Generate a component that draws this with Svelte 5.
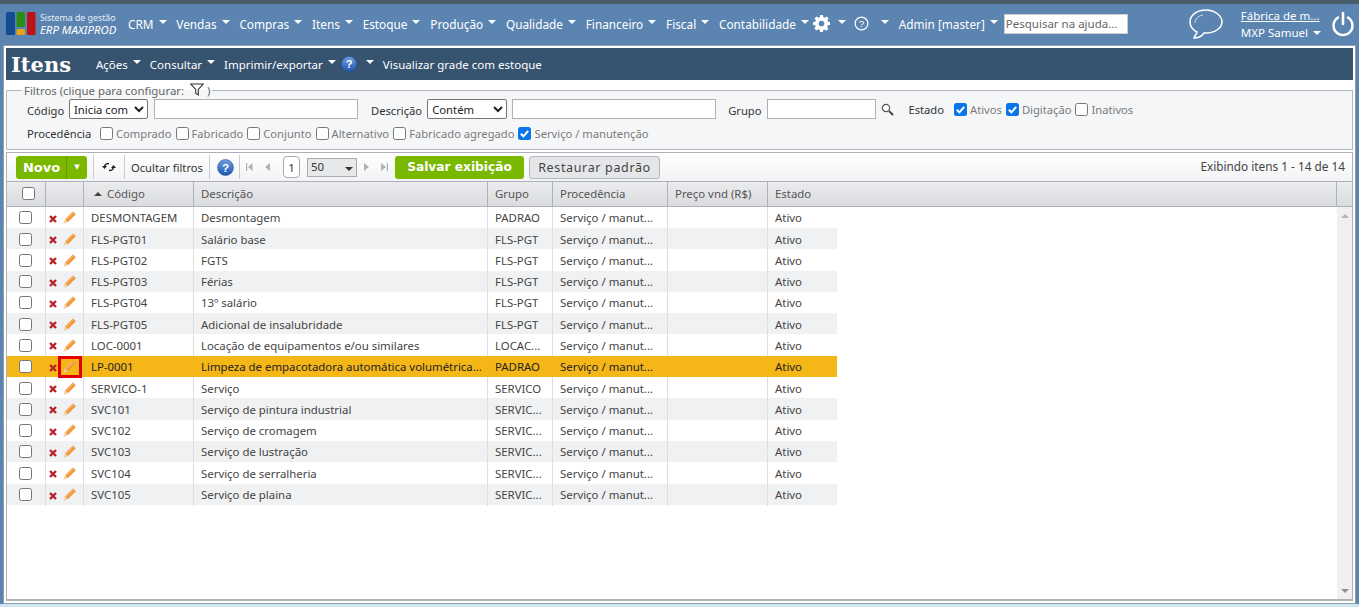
<script>
  const menus = ['CRM','Vendas','Compras','Itens','Estoque','Produção','Qualidade','Financeiro','Fiscal','Contabilidade'];
  const S = 'Serviço / manut...';
  const rows = [
    ['DESMONTAGEM','Desmontagem','PADRAO'],
    ['FLS-PGT01','Salário base','FLS-PGT'],
    ['FLS-PGT02','FGTS','FLS-PGT'],
    ['FLS-PGT03','Férias','FLS-PGT'],
    ['FLS-PGT04','13º salário','FLS-PGT'],
    ['FLS-PGT05','Adicional de insalubridade','FLS-PGT'],
    ['LOC-0001','Locação de equipamentos e/ou similares','LOCAC...'],
    ['LP-0001','Limpeza de empacotadora automática volumétrica...','PADRAO'],
    ['SERVICO-1','Serviço','SERVICO'],
    ['SVC101','Serviço de pintura industrial','SERVIC...'],
    ['SVC102','Serviço de cromagem','SERVIC...'],
    ['SVC103','Serviço de lustração','SERVIC...'],
    ['SVC104','Serviço de serralheria','SERVIC...'],
    ['SVC105','Serviço de plaina','SERVIC...']
  ];
  const proc = [['Comprado',false],['Fabricado',false],['Conjunto',false],['Alternativo',false],['Fabricado agregado',false],['Serviço / manutenção',true]];
</script>

{#snippet caret()}<span class="caret"></span>{/snippet}
{#snippet help(size)}
  <svg width={size} height={size} viewBox="0 0 16 16" class="help"><defs><linearGradient id="hg" x1="0" y1="0" x2="0" y2="1"><stop offset="0" stop-color="#6f9fe0"/><stop offset="1" stop-color="#1f55b5"/></linearGradient></defs><circle cx="8" cy="8" r="7.5" fill="url(#hg)" stroke="#2c5a9c" stroke-width=".6"/><text x="8" y="12" text-anchor="middle" font-size="11" font-weight="700" fill="#fff" font-family="Liberation Sans, sans-serif">?</text></svg>
{/snippet}
{#snippet box(checked)}
  {#if checked}
    <svg class="cb" width="13" height="13" viewBox="0 0 13 13"><rect width="13" height="13" rx="2.5" fill="#0a75e8"/><path d="M2.8 6.8l2.6 2.6 4.8-5.6" fill="none" stroke="#fff" stroke-width="2"/></svg>
  {:else}
    <span class="cb empty"></span>
  {/if}
{/snippet}

<div class="page">
  <div class="topstrip"></div>
  <header class="head">
    <div class="brand">
      <svg width="30" height="24" viewBox="0 0 30 24"><rect x="0" y="0" width="9" height="23" rx="1.5" fill="#124b8f"/><rect x="10.500" y="0" width="8.500" height="15" rx="1.500" fill="#2f8c12"/><rect x="10.500" y="17" width="8.500" height="6" rx="1.500" fill="#e4a817"/><rect x="21" y="0" width="8.500" height="23" rx="1.500" fill="#bd1216"/></svg>
      <div class="brandtext"><span>Sistema de gestão</span><em>ERP MAXIPROD</em></div>
    </div>
    <nav class="menu">
      {#each menus as m}<span class="mi">{m}{@render caret()}</span>{/each}
      <span class="mi ic gear">
        <svg width="17" height="17" viewBox="0 0 24 24"><path fill="#fff" fill-rule="evenodd" d="M10 1h4l.6 3.200 2 .8L19.300 3.200l2.800 2.800-1.800 2.700.8 2L24 11v4l-3.200.6-.8 2 1.800 2.700-2.800 2.800-2.700-1.800-2 .8L14 25h-4l-.6-3.200-2-.8-2.700 1.800-2.800-2.800 1.800-2.700-.8-2L0 15v-4l3.200-.6.8-2L2.200 5.700 5 3l2.700 1.800 2-.8zM12 9a4 4 0 1 0 0 8 4 4 0 0 0 0-8z" transform="translate(0 -1)"/></svg>
        <span class="caret c2"></span>
      </span>
      <span class="mi ic">
        <svg width="15" height="15" viewBox="0 0 16 16"><circle cx="8" cy="8" r="6.800" fill="none" stroke="#fff" stroke-width="1.300"/><text x="8" y="12" text-anchor="middle" font-size="10.500" fill="#fff" font-family="Liberation Sans, sans-serif">?</text></svg>
        <span class="caret c3"></span>
      </span>
      <span class="mi admin">Admin [master]{@render caret()}</span>
    </nav>
    <input class="search" placeholder="Pesquisar na ajuda..." />
    <svg class="chat" width="36" height="32" viewBox="0 0 36 32"><path d="M18 2C9 2 2 7 2 14c0 4 3 8 7 10-1 3-3 5-3 6 4 0 8-2 10-5h2c9 0 16-5 16-11S27 2 18 2z" fill="none" stroke="#fff" stroke-width="1.500"/><path d="M7 15c0-4 3-7 8-8" fill="none" stroke="#fff" stroke-width="1" opacity=".7"/></svg>
    <div class="who"><a href="#f">Fábrica de m...</a><span>MXP Samuel{@render caret()}</span></div>
    <svg class="power" width="24" height="26" viewBox="0 0 24 26"><path d="M7 6.500a9.500 9.500 0 1 0 10 0" fill="none" stroke="#fff" stroke-width="2.400" stroke-linecap="round"/><path d="M12 2v11" stroke="#fff" stroke-width="2.600" stroke-linecap="round"/></svg>
  </header>

  <main class="panel">
    <div class="titlebar">
      <h1>Itens</h1>
      <div class="tmenu">
        <span class="ti">Ações{@render caret()}</span>
        <span class="ti">Consultar{@render caret()}</span>
        <span class="ti">Imprimir/exportar{@render caret()}</span>
        <span class="ti hp">{@render help(16)}<span class="caret c4"></span></span>
        <span class="ti">Visualizar grade com estoque</span>
      </div>
    </div>

    <div class="filterwrap">
      <fieldset>
        <legend>Filtros (clique para configurar:
          <svg width="14" height="13" viewBox="0 0 14 13"><path d="M.8 1h12.400L8.300 6.500V12L5.700 10.300V6.500z" fill="#fff" stroke="#333" stroke-width="1.100"/></svg> )</legend>
        <div class="frow one">
          <label class="l1">Código</label>
          <select class="pick s1"><option>Inicia com</option></select>
          <input class="txt t0" />
          <label class="l2">Descrição</label>
          <select class="pick s2"><option>Contém</option></select>
          <input class="txt t1" />
          <label class="l3">Grupo</label>
          <input class="txt t2" />
          <svg class="mag" width="13" height="13" viewBox="0 0 13 13"><circle cx="5" cy="5" r="3.600" fill="#fff" stroke="#555" stroke-width="1.200"/><path d="M8 8l4 4" stroke="#444" stroke-width="2"/></svg>
          <label class="l4">Estado</label>
          <span class="ck">{@render box(true)}<i>Ativos</i></span>
          <span class="ck">{@render box(true)}<i>Digitação</i></span>
          <span class="ck">{@render box(false)}<i>Inativos</i></span>
        </div>
        <div class="frow two">
          <label class="l5">Procedência</label>
          {#each proc as p}<span class="ck">{@render box(p[1])}<i>{p[0]}</i></span>{/each}
        </div>
      </fieldset>
    </div>

    <div class="gridbox">
      <div class="toolbar">
        <div class="novo"><span class="nv">Novo</span><span class="nc">▼</span></div>
        <span class="sep"></span>
        <svg class="ref" width="16" height="14" viewBox="0 0 16 14"><path d="M8 3a4 4 0 0 0-5 3H1l2.500 3L6 6H4.500A2.600 2.600 0 0 1 8 4.500zM8 11a4 4 0 0 0 5-3h2l-2.500-3L10 8h1.500A2.600 2.600 0 0 1 8 9.500z" fill="#222"/></svg>
        <span class="sep"></span>
        <span class="oc">Ocultar filtros</span>
        <span class="sep"></span>
        <span class="h2">{@render help(17)}</span>
        <span class="sep"></span>
        <svg class="pg" width="24" height="10" viewBox="0 0 24 10"><path d="M0 1h1.200v8H0zM6.500 1v8L2 5zM24 1v8l-5-4z" fill="#aeb2b6"/></svg>
        <span class="pnum">1</span>
        <span class="psize">50<b></b></span>
        <svg class="pg2" width="24" height="10" viewBox="0 0 24 10"><path d="M0 1v8l5-4zM17 1v8l5-4zM22.800 1H24v8h-1.200z" fill="#aeb2b6"/></svg>
        <button class="save">Salvar exibição</button>
        <button class="rest">Restaurar padrão</button>
        <span class="count">Exibindo itens 1 - 14 de 14</span>
      </div>

      <div class="ghead">
        <div class="gh c0"><span class="cb empty big"></span></div>
        <div class="gh"></div>
        <div class="gh code"><span class="tri"></span>Código</div>
        <div class="gh">Descrição</div>
        <div class="gh">Grupo</div>
        <div class="gh">Procedência</div>
        <div class="gh">Preço vnd (R$)</div>
        <div class="gh last">Estado</div>
        <div class="gh sb"></div>
      </div>

      <div class="gbody">
        <div class="rows">
          {#each rows as r, i}
            <div class="row" class:alt={i % 2 === 1} class:hl={i === 7}>
              <div class="c c0"><span class="cb empty big"></span></div>
              <div class="c acts">
                <svg class="x" width="8" height="8" viewBox="0 0 8 8"><path d="M1 1l6 6M7 1L1 7" stroke="#bb2129" stroke-width="2.400"/></svg>
                <span class="pw" class:mark={i === 7}>
                  <svg class="pen" width="15" height="15" viewBox="0 0 15 15"><path d="M3 9.500L11 1.500 13.800 4.300 5.800 12.300z" fill="#ef9637"/><path d="M3 9.500L11 1.500 12.200 2.700 4.200 10.700z" fill="#f6ae63"/><path d="M3 9.500L1.300 14 5.800 12.300z" fill="#f4cf9e"/></svg>
                </span>
              </div>
              <div class="c">{r[0]}</div>
              <div class="c">{r[1]}</div>
              <div class="c">{r[2]}</div>
              <div class="c">{S}</div>
              <div class="c"></div>
              <div class="c">Ativo</div>
            </div>
          {/each}
        </div>
        <div class="scroll"><span class="up"></span><span class="down"></span></div>
      </div>
    </div>
  </main>
  <div class="foot"></div>
</div>

<style>
  :global(body) { margin: 0; background: #fff; overflow: hidden; }
  .page { width: 1359px; height: 607px; display: flex; flex-direction: column; font-family: "Noto Sans", "DejaVu Sans", sans-serif; font-size: 11.400px; color: #333; background: #5b84b1; overflow: hidden; }
  .topstrip { height: 4px; background: #495c6a; flex: none; }
  .head { height: 41px; flex: none; display: flex; align-items: center; color: #fff; background: #5b84b1; padding-bottom: 2px; box-sizing: border-box; }
  .brand { display: flex; align-items: center; margin-left: 6px; width: 122px; flex: none; gap: 4px; }
  .brandtext { display: flex; flex-direction: column; line-height: 12px; font-size: 8.800px; color: #e8eef5; white-space: nowrap; }
  .brandtext em { font-size: 11.400px; color: #fff; }
  .menu { display: flex; align-items: center; white-space: nowrap; height: 100%; }
  .mi { display: inline-flex; align-items: center; font-size: 11.800px; margin-right: 9.800px; position: relative; }
  .caret { display: inline-block; width: 0; height: 0; border-left: 4px solid transparent; border-right: 4px solid transparent; border-top: 4px solid #fff; margin-left: 5px; position: relative; top: -2px; }
  .ic { margin-right: 8px; }
  .gear { margin-left: -6px; }
  .c2 { margin-left: 8px; }
  .c3 { margin-left: 12px; }
  .admin { margin-left: 2px; margin-right: 0; }
  .search { width: 124px; height: 20px; box-sizing: border-box; margin-left: 6px; border: 1px solid #ccc; padding: 0 1px; font: 11.500px "Noto Sans", sans-serif; background: #fff; flex: none; }
  .search::placeholder { color: #666; opacity: 1; }
  .chat { margin-left: 60px; flex: none; }
  .who { margin-left: 17px; width: 82px; flex: none; display: flex; flex-direction: column; font-size: 11.500px; line-height: 17px; white-space: nowrap; }
  .who a { color: #fff; text-decoration: underline; }
  .power { margin-left: 8px; flex: none; }

  .panel { margin: 1px 4px 0 4px; border: 2px solid #fff; box-shadow: 0 0 0 1px #8e9cab; flex: 1; min-height: 0; display: flex; flex-direction: column; background: #fff; }
  .titlebar { height: 32px; flex: none; background: #36536f; color: #fff; display: flex; align-items: center; }
  h1 { font: 700 21px "DejaVu Serif", "Liberation Serif", serif; margin: 0 0 0 5px; width: 85px; }
  .tmenu { display: flex; align-items: center; font-size: 11.500px; white-space: nowrap; }
  .ti { display: inline-flex; align-items: center; margin-right: 9px; }
  .hp { margin-right: 9px; margin-left: -4px; }
  .help { flex: none; display: block; }
  .c4 { margin-left: 9px; }

  .filterwrap { flex: none; padding: 3px 0 0 0; background: #fff; }
  fieldset { margin: 0; padding: 0 0 0 20px; height: 67px; box-sizing: border-box; border: 1px solid #b4b8c0; background: #f5f6f7; }
  legend { padding: 0 2px; margin-left: -5px; font-size: 11.400px; color: #666; height: 14px; line-height: 15px; }
  legend svg { vertical-align: -1px; margin-left: 3px; }
  .frow { display: flex; align-items: center; white-space: nowrap; font-size: 11.200px; }
  .one { height: 22px; margin-top: 1px; }
  .two { height: 22px; margin-top: 2px; }
  label { color: #333; font-size: 11.200px; }
  .l1 { width: 42px; padding-top: 3px; }
  .pick { height: 20px; box-sizing: border-box; font: 11.300px "Noto Sans", sans-serif; border: 1px solid #767676; border-radius: 2px; background: #fff; padding: 0; color: #222; }
  .s1 { width: 79px; }
  .s2 { width: 80px; }
  .txt { height: 20px; box-sizing: border-box; border: 1px solid #b0b0b0; background: #fff; margin-left: 5px; padding: 0; }
  .t0 { width: 204px; margin-left: 6px; }
  .t1 { width: 204px; }
  .t2 { width: 109px; margin-left: 6px; }
  .l2 { margin-left: 13px; margin-right: 5px; padding-top: 3px; }
  .l3 { margin-left: 12px; padding-top: 3px; }
  .mag { margin-left: 5px; flex: none; }
  .l4 { margin-left: 14px; margin-right: 10px; }
  .l5 { width: 73px; }
  .ck { display: inline-flex; align-items: center; margin-right: 4px; }
  .ck i { font-style: normal; color: #7b7b7b; margin-left: 3px; }
  .cb { display: inline-block; flex: none; }
  .empty { width: 13px; height: 13px; box-sizing: border-box; border: 1px solid #767676; border-radius: 2.500px; background: #fff; }
  .big { width: 13px; height: 13px; }

  .gridbox { flex: 1; min-height: 0; margin-top: 2px; border: 1px solid #aeb2b8; border-bottom: 2px solid #aeb2b8; display: flex; flex-direction: column; background: #fff; }
  .toolbar { height: 28px; flex: none; background: linear-gradient(#fff, #f2f3f4); display: flex; align-items: center; padding-left: 9px; white-space: nowrap; position: relative; }
  .novo { display: flex; height: 23px; width: 71px; border-radius: 3px; background: #7ab800; color: #fff; font: 700 13px "DejaVu Sans", sans-serif; align-items: center; box-sizing: border-box; flex: none; }
  .nv { width: 51px; text-align: center; border-right: 1px solid #689c00; line-height: 23px; padding-left: 1px; box-sizing: border-box; }
  .nc { flex: 1; text-align: center; font-size: 7px; }
  .sep { width: 1px; height: 24px; background: #c9cdd1; flex: none; }
  .novo + .sep { margin-left: 6px; }
  .ref { margin: 0 7px; flex: none; }
  .oc { margin: 0 6px; color: #333; font-size: 11.200px; width: 72px; }
  .h2 { margin: 0 5px 0 7px; }
  .pg { margin-left: 6px; flex: none; }
  .pg2 { margin-left: 7px; flex: none; }
  .pnum { width: 17px; height: 22px; border: 1px solid #aaa; border-radius: 4px; background: #fff; text-align: center; line-height: 21px; margin-left: 13px; box-sizing: border-box; flex: none; }
  .psize { width: 50px; height: 19px; margin-left: 7px; box-sizing: border-box; border: 1px solid #aaa; background: #e6e8ea; line-height: 15px; padding-left: 3px; position: relative; display: block; flex: none; }
  .psize b { position: absolute; right: 3px; top: 8px; width: 0; height: 0; border-left: 4px solid transparent; border-right: 4px solid transparent; border-top: 4px solid #333; }
  .save { height: 23px; width: 129px; margin-left: 7px; border: 0; border-radius: 3px; background: #7ab800; color: #fff; font: 700 12.200px "DejaVu Sans", sans-serif; padding: 0; flex: none; }
  .rest { height: 23px; width: 131px; margin-left: 5px; border: 1px solid #b4b8be; border-radius: 3px; background: #e4e6e9; color: #444; font: 12.500px "Noto Sans", sans-serif; letter-spacing: .65px; padding: 0; flex: none; }
  .count { position: absolute; right: 7px; top: 5px; color: #444; font-size: 11.800px; }

  .ghead { height: 26px; flex: none; display: grid; grid-template-columns: 39px 38px 110px 294px 65px 115px 100px 1fr 15px; background: linear-gradient(#ebecee, #d9dbde); border-top: 1px solid #aeb2b8; border-bottom: 1px solid #aeb2b8; box-sizing: border-box; color: #555; }
  .gh { display: flex; align-items: center; padding: 0 0 1px 7px; border-right: 1px solid #aeb2b8; min-width: 0; }
  .gh.c0 { padding-left: 15px; }
  .gh.sb { border-right: 0; }
  .code { padding-left: 10px; }
  .tri { width: 0; height: 0; border-left: 4px solid transparent; border-right: 4px solid transparent; border-bottom: 4px solid #444; margin-right: 5px; }

  .gbody { flex: 1; min-height: 0; display: flex; }
  .rows { flex: 1; display: grid; grid-auto-rows: 21.300px; align-content: start; margin-top: -.3px; }
  .row { display: grid; grid-template-columns: 39px 38px 110px 294px 65px 115px 100px 69px; width: 830px; color: #444; }
  .alt { background: #f0f1f2; }
  .hl { background: #f5b618; color: #222; }
  .hl .c { border-color: transparent; }
  .c { display: flex; align-items: center; padding-left: 7px; border-right: 1px solid #dcdee0; white-space: nowrap; overflow: hidden; }
  .c:last-child { border-right: 0; }
  .c.c0 { padding-left: 12px; }
  .acts { padding-left: 3px; gap: 1px; overflow: visible; }
  .x { position: relative; top: 1px; flex: none; }
  .pw { width: 24px; height: 22px; box-sizing: border-box; flex: none; display: flex; align-items: center; justify-content: center; border: 3px solid transparent; position: relative; z-index: 1; }
  .pen { flex: none; margin-left: -1px; }
  .pw.mark { border-color: #e00000; }
  .scroll { width: 15px; flex: none; background: #f0f0f0; display: flex; flex-direction: column; justify-content: space-between; align-items: center; padding: 7px 0 6px; box-sizing: border-box; }
  .up, .down { width: 0; height: 0; border-left: 4px solid transparent; border-right: 4px solid transparent; }
  .up { border-bottom: 4px solid #b5b5b5; }
  .down { border-top: 4px solid #8f8f8f; }
  .foot { height: 3px; background: #cde6f0; flex: none; margin-top: 1px; }
</style>
